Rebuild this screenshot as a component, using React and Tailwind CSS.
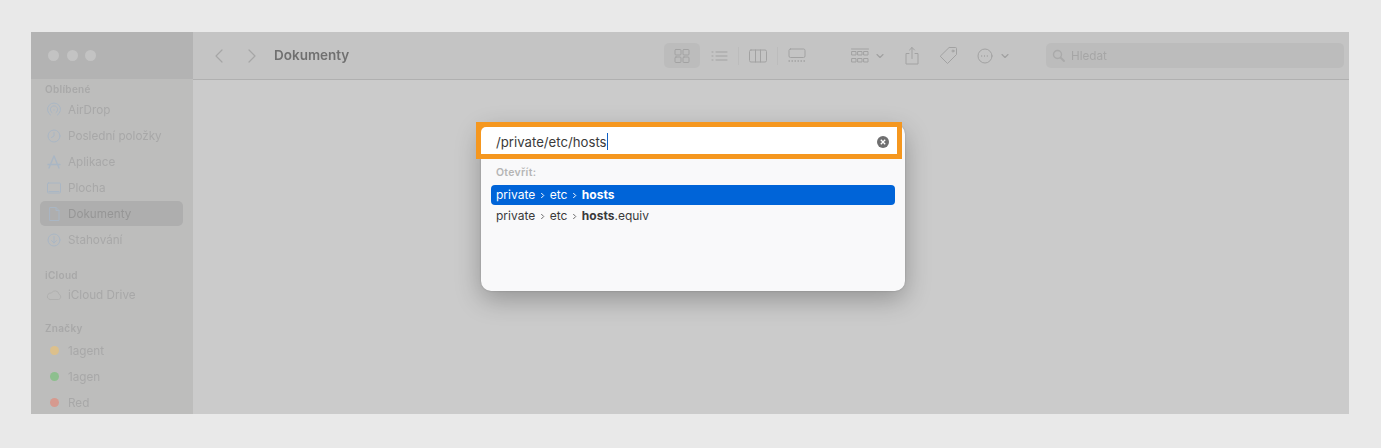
import React from "react";

const Svg = ({ w = 16, h = 16, children, cls = "" }) => (
  <svg width={w} height={h} viewBox={`0 0 ${w} ${h}`} fill="none" stroke="currentColor" strokeWidth="1" strokeLinecap="round" strokeLinejoin="round" className={cls}>
    {children}
  </svg>
);

const Chev = ({ dir }) => (
  <Svg w={12} h={16} cls="text-[#a6a6a6]">
    <path strokeWidth="1.2" d={dir === "l" ? "M9 2 L3 8 L9 14" : "M3 2 L9 8 L3 14"} />
  </Svg>
);
const Down = () => (
  <Svg w={8} h={6} cls="text-[#a0a0a0]"><path strokeWidth="1.1" d="M1 1.5 L4 4.5 L7 1.5" /></Svg>
);

const sideIcons = {
  air: <g className="text-[#a9b6c4]"><path d="M4.5 13 A6.5 6.5 0 1 1 11.5 13 M6 10.7 A3.7 3.7 0 1 1 10 10.7" /><path strokeWidth="1.4" d="M8 8 V8.1" /></g>,
  clock: <g className="text-[#a9b6c4]"><circle cx="8" cy="8" r="6" /><path d="M8 4.5 V8 L5.5 9.5" /></g>,
  apps: <g className="text-[#a9b6c4]"><path strokeWidth="1.4" d="M8 2 L3 14 M8 2 L13 14 M2 10.5 H14" /></g>,
  desk: <g className="text-[#a9b6c4]"><rect x="1.5" y="3" width="13" height="10" rx="1" /><path d="M3 11.5 H13" /></g>,
  doc: <g className="text-[#a9b6c4]"><path d="M4 1.5 H10 L13 4.5 V14.5 H4 Z M10 1.5 V4.5 H13" /></g>,
  dl: <g className="text-[#a9b6c4]"><circle cx="8" cy="8" r="6" /><path d="M8 4.5 V11 M5.5 8.5 L8 11 L10.5 8.5" /></g>,
  cloud: <g className="text-[#b0b0af]"><path d="M4 12.5 H12.5 A2.7 2.7 0 0 0 13 7.3 A4 4 0 0 0 5.5 6 A3.3 3.3 0 0 0 4 12.5 Z" /></g>,
};

const Item = ({ icon, label, active }) => (
  <div className={`h-[25px] mb-px flex items-center rounded-[5px] pl-[6px] ${active ? "bg-[#aeaeae]" : ""}`}>
    <span className="w-4 h-4 mr-[6px] mt-px flex items-center justify-center">
      <Svg>{sideIcons[icon]}</Svg>
    </span>
    <span className={`text-[11.7px] pt-[3px] ${active ? "text-[#969696]" : "text-[#a8a8a8]"}`}>{label}</span>
  </div>
);
const Tag = ({ color, label }) => (
  <div className="h-[25px] mb-px flex items-center pl-[6px]">
    <span className="w-4 h-4 mr-[6px] flex items-center justify-center">
      <span className={`w-[9px] h-[9px] rounded-full ${color}`} />
    </span>
    <span className="text-[11.7px] pt-[2px] text-[#a8a8a8]">{label}</span>
  </div>
);
const Head = ({ children, cls }) => (
  <div className={`pl-[5px] text-[10px] font-semibold text-[#a8a8a8] tracking-[0.3px] leading-[14px] ${cls}`}>{children}</div>
);

const Sep = ({ white }) => (
  <svg width="14.5" height="9" viewBox="0 0 14 9" className={`inline-block ${white ? "text-white" : "text-[#6a6a6a]"}`} fill="none" stroke="currentColor" strokeWidth="1">
    <path d="M6 2 L8.5 4.5 L6 7" />
  </svg>
);
const Path = ({ name, rest, white }) => (
  <span className={`text-[12px] ${white ? "text-white" : "text-[#3a3a3a]"}`}>
    private<Sep white={white} />etc<Sep white={white} /><b className="font-bold">{name}</b>{rest}
  </span>
);

export default function App() {
  return (
    <div className="relative h-[448px] w-[1381px] overflow-hidden bg-[#e9e9e9] pt-[32px] pl-[31px] pr-[32px] pb-[34px] font-['Inter',sans-serif]">
      <div className="relative flex h-full overflow-hidden bg-[#cbcbcb]">
        <aside className="w-[162px] shrink-0 bg-[#bdbdbc]">
          <div className="h-[47px] bg-[#b3b3b3] flex items-center gap-[7.5px] pl-[17px] text-[0px]">
            <span className="w-[11px] h-[11px] rounded-full bg-[#c3c3c3] blur-[0.4px]" />
            <span className="w-[11px] h-[11px] rounded-full bg-[#c3c3c3] blur-[0.4px]" />
            <span className="w-[11px] h-[11px] rounded-full bg-[#c3c3c3] blur-[0.4px]" />
          </div>
          <div className="pl-[9px] pr-[10px] pt-[3px]">
            <div className="blur-[0.4px]">
              <Head cls="mb-[1px]">Oblíbené</Head>
              <Item icon="air" label="AirDrop" />
              <Item icon="clock" label="Poslední položky" />
              <Item icon="apps" label="Aplikace" />
              <Item icon="desk" label="Plocha" />
              <Item icon="doc" label="Dokumenty" active />
              <Item icon="dl" label="Stahování" />
              <Head cls="mt-[16px]">iCloud</Head>
              <Item icon="cloud" label="iCloud Drive" />
              <Head cls="mt-[14px] mb-[3px]">Značky</Head>
              <Tag color="bg-[#dcc08c]" label="1agent" />
              <Tag color="bg-[#8dbf8e]" label="1agen" />
              <Tag color="bg-[#d69a8f]" label="Red" />
            </div>
          </div>
        </aside>

        <main className="flex-1 min-w-0 flex flex-col">
          <header className="h-[48px] shrink-0 bg-[#c4c4c4] border-b border-[#b0b0b0] flex items-center pl-[20px] pr-[5px]">
            <Chev dir="l" />
            <span className="ml-[21px]"><Chev dir="r" /></span>
            <div className="ml-[16px] w-[390px] text-[13.5px] font-semibold text-[#707070] blur-[0.3px]">Dokumenty</div>

            <div className="w-[36px] h-[25px] rounded-[5px] bg-[#bcbcbc] flex items-center justify-center text-[#a2a2a2]">
              <Svg w={16} h={16}>
                <rect x="1" y="1.5" width="6" height="5.5" rx="1" /><rect x="9" y="1.5" width="6" height="5.5" rx="1" />
                <rect x="1" y="9" width="6" height="5.5" rx="1" /><rect x="9" y="9" width="6" height="5.5" rx="1" />
              </Svg>
            </div>
            <div className="w-[38px] flex justify-center text-[#a2a2a2]">
              <Svg w={17} h={14}><path d="M5 3 H16 M5 7 H16 M5 11 H16 M1 3 H2 M1 7 H2 M1 11 H2" /></Svg>
            </div>
            <span className="w-px h-[18px] bg-[#bcbcbc]" />
            <div className="w-[38px] flex justify-center text-[#a2a2a2]">
              <Svg w={18} h={14}><rect x="0.5" y="1" width="17" height="12" rx="1.5" /><path d="M6.5 1 V13 M11.5 1 V13" /></Svg>
            </div>
            <span className="w-px h-[18px] bg-[#bcbcbc]" />
            <div className="w-[38px] flex justify-center text-[#a2a2a2]">
              <Svg w={18} h={15}><rect x="1" y="1" width="16" height="8.5" rx="1.5" /><path strokeDasharray="1.5 1.5" strokeLinecap="butt" strokeWidth="1.4" d="M0.5 13 H18" /></Svg>
            </div>

            <div className="ml-[35px] flex items-center text-[#a2a2a2]">
              <Svg w={18} h={16}>
                <path d="M0.5 1 H17.5" />
                <rect x="1" y="3.5" width="4" height="3.5" /><rect x="7" y="3.5" width="4" height="3.5" /><rect x="13" y="3.5" width="4" height="3.5" />
                <rect x="1" y="10.5" width="4" height="3.5" /><rect x="7" y="10.5" width="4" height="3.5" /><rect x="13" y="10.5" width="4" height="3.5" />
              </Svg>
              <span className="ml-[7px]"><Down /></span>
            </div>

            <div className="ml-[21px] text-[#a2a2a2] flex">
              <Svg w={14} h={20}>
                <path d="M4 7.5 H1 V18 H13 V7.5 H10" /><path d="M7 12.5 V1.5 M4.5 4 L7 1.5 L9.5 4" />
              </Svg>
            </div>

            <div className="ml-[20px] text-[#a2a2a2] flex">
              <Svg w={19} h={19}>
                <path d="M10.5 1.5 H16.5 A1 1 0 0 1 17.5 2.5 V8.5 L8.5 17.5 L1.5 10.5 Z" /><circle cx="14" cy="5" r="1" />
              </Svg>
            </div>

            <div className="ml-[19px] flex items-center text-[#a2a2a2]">
              <Svg w={16} h={16}>
                <circle cx="8" cy="8" r="7" /><path strokeWidth="1.3" strokeDasharray="1 1.8" strokeLinecap="butt" d="M4.2 8 H12" />
              </Svg>
              <span className="ml-[8px]"><Down /></span>
            </div>

            <div className="ml-[37px] h-[25px] flex-1 rounded-[5px] bg-[#bcbcbc] flex items-center pl-[6px]">
              <span className="text-[#aaaaaa] flex">
                <Svg w={13} h={13}><circle cx="5.5" cy="5.5" r="4" strokeWidth="1.4" /><path strokeWidth="1.8" d="M8.5 8.5 L12 12" /></Svg>
              </span>
              <span className="ml-[6px] text-[11.7px] pt-[3px] text-[#a6a6a6] blur-[0.3px]">Hledat</span>
            </div>
          </header>
          <div className="flex-1 bg-[#cbcbcb]" />
        </main>
      </div>

      {/* Dialog over the window */}
      <div className="absolute left-[481px] top-[124px] w-[424px] h-[167px] rounded-[10px] bg-[#f9f9fa] shadow-[0_8px_26px_rgba(0,0,0,0.28),0_0_2px_rgba(0,0,0,0.2)] px-[10px] pt-[40px]">
        <div className="h-[18px] pl-[5px] flex items-center text-[10.5px] font-semibold text-[#b5b5b5] tracking-[0.3px]">Otevřít:</div>
        <div className="mt-[3px] h-[20px] rounded-[4px] bg-[#0064d8] pl-[5px] flex items-center"><Path name="hosts" white /></div>
        <div className="mt-[1px] h-[20px] pl-[5px] flex items-center"><Path name="hosts" rest=".equiv" /></div>
      </div>

      {/* Orange highlight around the field */}
      <div className="absolute left-[476px] top-[122px] w-[426px] h-[37px] bg-[#f5971f] p-[5px]">
        <div className="h-full bg-white rounded-tl-[5px] flex items-center pl-[15px] pr-[8px] pt-[2px]">
          <span className="text-[13.2px] leading-[18px] text-[#3a3a3a]">/private/etc/hosts</span>
          <span className="w-px h-[17px] bg-[#0f5fc4]" />
          <span className="ml-auto w-[12px] h-[12px] rounded-full bg-[#6f6f70] flex items-center justify-center">
            <svg width="6" height="6" viewBox="0 0 6 6" fill="none" stroke="white" strokeWidth="1.3"><path d="M0.8 0.8 L5.2 5.2 M5.2 0.8 L0.8 5.2" /></svg>
          </span>
        </div>
      </div>
    </div>
  );
}
